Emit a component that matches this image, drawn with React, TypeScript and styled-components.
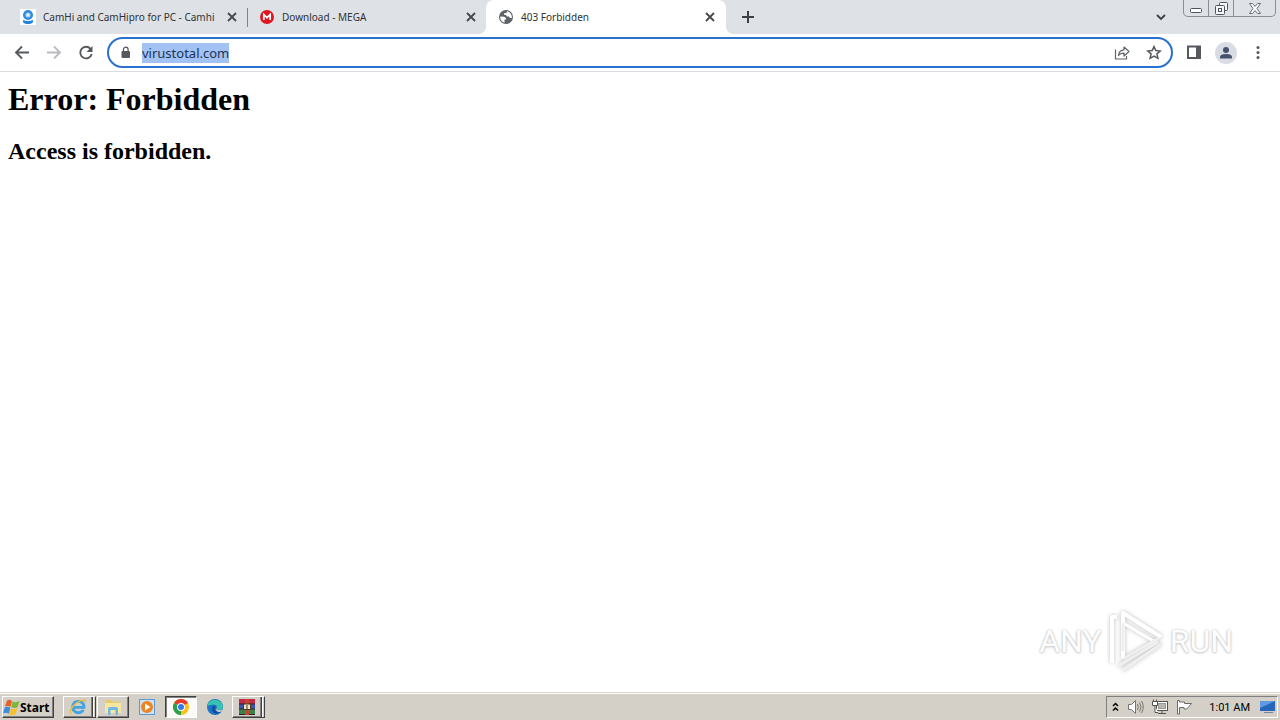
import React from "react";
import styled, { createGlobalStyle, css } from "styled-components";

const GlobalStyle = createGlobalStyle`
  * { box-sizing: border-box; }
  html, body { margin: 0; background: #fff; }
  button, input { font: inherit; color: inherit; margin: 0; padding: 0; border: 0; background: none; }
  svg { display: block; flex: none; }
`;

const Desktop = styled.div`
  position: relative;
  min-height: 100vh;
  display: flex;
  flex-direction: column;
  font-family: Roboto, "Noto Sans", sans-serif;
  font-size: 11px;
  color: #3c4043;
`;

const TabStrip = styled.header`
  display: flex;
  height: 34px;
  padding-left: 8px;
  background: #dee1e6;
`;

const TabList = styled.nav`
  display: flex;
  min-width: 0;
  margin-right: 5px;
`;

const Tab = styled.div<{ $active?: boolean; $divided?: boolean }>`
  position: relative;
  display: flex;
  align-items: center;
  gap: 7px;
  width: 239px;
  padding: 0 7px 0 12px;
  border-radius: 8px 8px 0 0;
  ${(p) =>
    p.$active &&
    css`
      width: 240px;
      padding-right: 8px;
      background: #fff;
      &::before,
      &::after {
        content: "";
        position: absolute;
        bottom: 0;
        width: 8px;
        height: 8px;
      }
      &::before {
        left: -8px;
        background: radial-gradient(circle at 0 0, transparent 8px, #fff 8px);
      }
      &::after {
        right: -8px;
        background: radial-gradient(circle at 100% 0, transparent 8px, #fff 8px);
      }
    `}
  ${(p) =>
    p.$divided &&
    css`
      &::after {
        content: "";
        position: absolute;
        right: -1px;
        top: 8px;
        width: 1px;
        height: 19px;
        background: #808489;
      }
    `}
`;

const TabTitle = styled.span`
  flex: 1;
  min-width: 0;
  white-space: nowrap;
  font-family: "Noto Sans", "Open Sans", sans-serif;
  font-size: 10px;
  line-height: 16px;
  color: #303236;
`;

const IconButton = styled.button<{ $size?: number }>`
  display: flex;
  flex: none;
  align-items: center;
  justify-content: center;
  width: ${(p) => p.$size ?? 32}px;
  height: ${(p) => p.$size ?? 32}px;
`;

const StripEnd = styled.div`
  display: flex;
  align-items: flex-start;
  gap: 5px;
  margin-left: auto;
  padding-right: 4px;
`;

const WindowControls = styled.div`
  display: flex;
  height: 17px;
  border: 1px solid #8a8d92;
  border-top: 0;
  border-radius: 0 0 5px 5px;
`;

const WindowButton = styled.button<{ $width: number }>`
  display: flex;
  align-items: center;
  justify-content: center;
  width: ${(p) => p.$width}px;
  & + & {
    border-left: 1px solid #8a8d92;
  }
`;

const Toolbar = styled.div`
  display: flex;
  align-items: center;
  height: 38px;
  padding: 0 6px;
  border-bottom: 1px solid #dcdcde;
  background: #fff;
`;

const AddressBar = styled.form`
  display: flex;
  flex: 1;
  align-items: center;
  height: 31px;
  margin: 0 5px;
  padding: 0 1px 0 10px;
  border: 2px solid #2a70cf;
  border-radius: 16px;
`;

const AddressInput = styled.input`
  flex: 1;
  min-width: 0;
  height: 20px;
  margin-left: 9px;
  outline: 0;
  font-family: "Noto Sans", "Open Sans", sans-serif;
  font-size: 13px;
  line-height: 20px;
  color: #1c3357;
  background: linear-gradient(#a1c2f3, #a1c2f3) left / 87px 20px no-repeat;
`;

const Page = styled.main`
  flex: 1;
  padding: 9px 8px;
  font-family: "Liberation Serif", serif;
  color: #000;
`;

const Heading = styled.h1`
  margin: 0 0 20px;
  font-size: 32px;
  line-height: 37px;
`;

const SubHeading = styled.h2`
  margin: 0;
  font-size: 24px;
  line-height: 27px;
`;

const Watermark = styled.div`
  position: absolute;
  right: 47px;
  bottom: 47px;
  display: flex;
  align-items: center;
  gap: 5px;
  font-family: Roboto, sans-serif;
  font-size: 32px;
  line-height: 64px;
  color: #fdfdfd;
  text-shadow: 0 0 2px #bbb, 0 1px 3px #ccc;
`;

const Taskbar = styled.footer`
  display: flex;
  align-items: center;
  height: 28px;
  padding: 1px 2px 0;
  border-top: 1px solid #d8d5cf;
  box-shadow: inset 0 1px #fff;
  background: #d4d0c8;
  color: #000;
`;

const StartButton = styled.button`
  display: flex;
  align-items: center;
  width: 52px;
  height: 22px;
  margin-right: 9px;
  border: 1px solid;
  border-color: #fff #404040 #404040 #fff;
  box-shadow: inset -1px -1px #808080;
  font-family: "Noto Sans", "Open Sans", sans-serif;
  font-weight: 700;
  font-size: 12px;
`;

const TaskButton = styled.button<{ $state?: "open" | "active" | "grouped" }>`
  display: flex;
  align-items: center;
  justify-content: center;
  width: 34px;
  height: 22px;
  ${(p) =>
    p.$state === "grouped" &&
    css`
      width: 33px;
      padding-right: 4px;
      border: 1px solid;
      border-color: #fff #404040 #404040 #fff;
      box-shadow: inset -1px 0 #d4d0c8, inset -2px 0 #fff, inset -3px 0 #404040, inset -4px -1px #808080;
    `}
  ${(p) =>
    p.$state === "open" &&
    css`
      width: 32px;
      margin: 0 1px;
      border: 1px solid;
      border-color: #fff #404040 #404040 #fff;
      box-shadow: inset -1px -1px #808080;
    `}
  ${(p) =>
    p.$state === "active" &&
    css`
      width: 32px;
      margin: 0 1px;
      border: 1px solid;
      border-color: #404040 #fff #fff #404040;
      box-shadow: inset 1px 1px #808080;
      background: #fbfaf8;
    `}
`;

const Tray = styled.div`
  display: flex;
  align-items: center;
  gap: 8px;
  height: 22px;
  margin-left: auto;
  padding: 0 1px 0 5px;
  border: 1px solid;
  border-color: #808080 #fff #fff #808080;
`;

const Clock = styled.time`
  margin: 0 2px 0 8px;
  white-space: nowrap;
`;

const CloseIcon = () => (
  <svg width="10" height="10" viewBox="0 0 10 10" stroke="#45484c" strokeWidth="1.8">
    <path d="M1 1l8 8M9 1l-8 8" />
  </svg>
);

const CameraFavicon = () => (
  <svg width="16" height="16" viewBox="0 0 16 16">
    <rect width="16" height="16" fill="#fff" />
    <circle cx="8" cy="6" r="5" fill="#2c8be0" />
    <circle cx="8" cy="6" r="2.6" fill="#9bd0f8" />
    <circle cx="8" cy="6" r="1.4" fill="#e4f3ff" />
    <path d="M3 11q5 2 10 0v2q-1 2-5 2t-5-2z" fill="#2582d8" />
  </svg>
);

const MegaFavicon = () => (
  <svg width="16" height="16" viewBox="0 0 16 16">
    <circle cx="8" cy="8" r="7" fill="#df1720" />
    <path d="M4.800 11V5.500L8 8.700l3.200-3.200V11" fill="none" stroke="#fff" strokeWidth="1.700" />
  </svg>
);

const GlobeFavicon = () => (
  <svg width="16" height="16" viewBox="0 0 16 16">
    <circle cx="8" cy="8" r="7" fill="#5f6368" />
    <path d="M2.300 7.500l3.700.2 2 1.300v1.500H6.500v3.300A6 6 0 0 1 2.300 7.500zM9 2.200L8.500 4H6.300v2H8l1 1.500h2l1 1.500h1.800A6 6 0 0 0 9 2.200z" fill="#fff" />
  </svg>
);

const ArrowIcon = ({ forward }: { forward?: boolean }) => (
  <svg width="16" height="16" viewBox="0 0 16 16" fill="none" stroke={forward ? "#b9bbbe" : "#55585c"} strokeWidth="1.800">
    <path d={forward ? "M1 7.500h13M8 1.500l6 6-6 6" : "M15 7.500H2M8 1.500l-6 6 6 6"} />
  </svg>
);

const ReloadIcon = () => (
  <svg width="16" height="16" viewBox="0 0 16 16">
    <path d="M12.500 3.800A5.800 5.800 0 1 0 13.700 9" fill="none" stroke="#55585c" strokeWidth="1.900" />
    <path d="M14.500 1v6H8.500z" fill="#55585c" />
  </svg>
);

const LockIcon = () => (
  <svg width="14" height="14" viewBox="0 0 14 14">
    <rect x="2.500" y="5" width="8.500" height="7" rx="1" fill="#55585c" />
    <path d="M4.500 6V3.500a2.300 2.300 0 0 1 4.600 0V6" fill="none" stroke="#55585c" strokeWidth="1.300" />
  </svg>
);

const ShareIcon = () => (
  <svg width="16" height="16" viewBox="0 0 16 16" fill="none" stroke="#5f6368" strokeWidth="1.200">
    <path d="M1.500 4.500v9.500h11v-3" />
    <path d="M4.500 10.500q.5-5.500 5.500-5.700V2L15 6.500l-5 4.500V8.200Q6.500 8 4.500 10.500z" strokeLinejoin="round" />
  </svg>
);

const StarIcon = () => (
  <svg width="16" height="16" viewBox="0 0 16 16" fill="none" stroke="#55585c" strokeWidth="1.500">
    <path d="M8 1.600l1.800 4 4.500.4-3.400 2.900 1 4.400L8 11l-3.900 2.300 1-4.400L1.700 6l4.500-.4z" />
  </svg>
);

const PanelIcon = () => (
  <svg width="16" height="16" viewBox="0 0 16 16">
    <path d="M1 0.500h14v13.500H1zM3 2.500v9.500h7V2.500z" fillRule="evenodd" fill="#55585c" />
  </svg>
);

const ProfileIcon = () => (
  <svg width="22" height="22" viewBox="0 0 22 22">
    <circle cx="11" cy="11" r="11" fill="#dadce3" />
    <circle cx="11" cy="8" r="3" fill="#46526c" />
    <path d="M5 16.500v-1.500q0-3 6-3t6 3v1.500z" fill="#46526c" />
  </svg>
);

const MenuIcon = () => (
  <svg width="4" height="16" viewBox="0 0 4 16" fill="#55585c">
    <circle cx="2" cy="2.500" r="1.500" />
    <circle cx="2" cy="7.500" r="1.500" />
    <circle cx="2" cy="12.500" r="1.500" />
  </svg>
);

const FlagIcon = () => (
  <svg width="17" height="17" viewBox="0 0 17 17">
    <path d="M4 1.500q3-1.500 5 .5L7.600 7.800Q5 6.300 2 7.600z" fill="#e8602c" />
    <path d="M9.600 2.500q3 1.500 6.900-.5L14.600 8.300q-3.300 1.500-6.400 0z" fill="#7cb63c" />
    <path d="M1.700 8.500q3-1.500 5.600.2L6 14.700Q3.500 13 0 14.300z" fill="#3e8edb" />
    <path d="M7.900 9.300q3 1.500 6.400 0L12.500 15.500q-3 1.500-6-.2z" fill="#f6c22c" />
  </svg>
);

const InternetExplorerIcon = () => (
  <svg width="18" height="18" viewBox="0 0 18 18" fill="none">
    <path d="M14.300 11.800A5.700 5.700 0 1 1 15 9.300H5" stroke="#3fa3e4" strokeWidth="2.800" />
    <path d="M2.800 16C-.8 14.500 2.500 8.500 7.500 5s9.500-4.500 9-.5" stroke="#efbd35" strokeWidth="1.500" />
  </svg>
);

const FolderIcon = () => (
  <svg width="18" height="18" viewBox="0 0 18 18">
    <path d="M2 2h5l1 1.500h7V15H2z" fill="#eacb68" />
    <path d="M1 5h16v10H1z" fill="#f7e6a0" />
    <path d="M4 17v-6q0-2 2-2h6q2 0 2 2v6h-2.500v-5h-5v5z" fill="#6eb8e4" />
  </svg>
);

const MediaIcon = () => (
  <svg width="16" height="16" viewBox="0 0 16 16">
    <rect x=".5" y=".5" width="15" height="15" fill="#cde3f5" stroke="#5b9bd2" />
    <circle cx="8" cy="8" r="6" fill="#ee8420" />
    <path d="M6 4.500l5.500 3.500L6 11.500z" fill="#fff" />
  </svg>
);

const ChromeIcon = () => (
  <svg width="16" height="16" viewBox="0 0 16 16">
    <circle cx="8" cy="8" r="8" fill="#fbc116" />
    <path d="M8 8L1.070 4A8 8 0 0 1 14.930 4z" fill="#e33b2e" />
    <path d="M8 8L8 16A8 8 0 0 1 1.070 4z" fill="#2aa24c" />
    <circle cx="8" cy="8" r="4" fill="#fff" />
    <circle cx="8" cy="8" r="3" fill="#3478e6" />
  </svg>
);

const EdgeIcon = () => (
  <svg width="16" height="16" viewBox="0 0 16 16">
    <circle cx="8" cy="8" r="8" fill="#1976c8" />
    <path d="M.2 7A8 8 0 0 1 16 8q-.2 3-3.500 3-3.500 0-2.500-2 .5-3-3-3.500-4 0-6.800 1.500z" fill="#36c4b0" />
    <path d="M6 7q-3 4 1 7 3 2 7-1-4 1-6-1.500Q7 9 9 8 8 6 6 7z" fill="#0f4f9f" />
    <path d="M9.500 8q-1 3.300 3 3.300 2 0 3-1.300l-1 2.500q-2 .8-3.500.3Q8 11.500 9.500 8z" fill="#d4d0c8" />
  </svg>
);

const ArchiveIcon = () => (
  <svg width="18" height="18" viewBox="0 0 18 18">
    <rect x="1" y="1" width="16" height="5" fill="#c02a48" />
    <rect x="1" y="6" width="16" height="5" fill="#3c55ac" />
    <rect x="1" y="11" width="16" height="5" fill="#3d8050" />
    <path d="M1 6h16M1 11h16M1 16.500h16" stroke="#342222" />
    <rect x="7" y="1" width="4" height="16" fill="#c4452c" />
    <rect x="5.500" y="6" width="7" height="5.500" fill="#eee4c4" stroke="#4d3b25" />
    <path d="M9 7v4" stroke="#4d3b25" />
  </svg>
);

const SpeakerIcon = () => (
  <svg width="17" height="16" viewBox="0 0 17 16" fill="none" stroke="#77756f">
    <path d="M1.500 5.500h3l4-4v13l-4-4h-3z" fill="#fff" />
    <path d="M10.500 5q1.500 3 0 6M12.500 3.500q3 4.500 0 9M14.500 2q3.500 6 0 12" />
  </svg>
);

const NetworkIcon = () => (
  <svg width="16" height="16" viewBox="0 0 16 16" fill="#fff" stroke="#55534f">
    <rect x="4.500" y="2.500" width="11" height="9" />
    <rect x="6.500" y="4.500" width="7" height="5" fill="#bbb8b0" stroke="#999" />
    <path d="M.5 2.500h5v4h-5zM1.500.5v2M4.500.5v2M3 6.500v7h3M6 14.500h8M10 11.500v3" />
  </svg>
);

const PennantIcon = () => (
  <svg width="17" height="16" viewBox="0 0 17 16" fill="#fff" stroke="#6c6a65">
    <path d="M1.500 1.500H3.500V3H8.500V4.500H15.500L13 7.500 10.500 10H8V8.500H3.500V15h-2z" />
  </svg>
);

const DesktopIcon = () => (
  <svg width="16" height="16" viewBox="0 0 16 16">
    <path d="M0 2h15v10H0z" fill="#2766bd" />
    <path d="M0 2h15L0 9z" fill="#5f9be3" />
    <path d="M4 13h9v1H4z" fill="#74859e" />
  </svg>
);

const PlayDrawing = styled.svg`
  filter: drop-shadow(0 0 2px #bdbdbd);
`;

const PlayMark = () => (
  <PlayDrawing width="58" height="64" viewBox="0 0 58 64" fill="none" stroke="#fff" strokeWidth="4" strokeLinejoin="round">
    <path d="M10 8H5v46M16 50V4l38 24" />
    <path d="M16 14l32 19" strokeWidth="3" />
    <path d="M16 42V14M16 50l36-21M11 57l40-24M16 61l38-26" stroke="#efefef" strokeWidth="3" />
  </PlayDrawing>
);

export default function App() {
  return (
    <Desktop>
      <GlobalStyle />
      <TabStrip>
        <TabList aria-label="Tabs">
          <Tab $divided>
            <CameraFavicon />
            <TabTitle>CamHi and CamHipro for PC - Camhi</TabTitle>
            <IconButton $size={16} aria-label="Close tab"><CloseIcon /></IconButton>
          </Tab>
          <Tab>
            <MegaFavicon />
            <TabTitle>Download - MEGA</TabTitle>
            <IconButton $size={16} aria-label="Close tab"><CloseIcon /></IconButton>
          </Tab>
          <Tab $active>
            <GlobeFavicon />
            <TabTitle>403 Forbidden</TabTitle>
            <IconButton $size={16} aria-label="Close tab"><CloseIcon /></IconButton>
          </Tab>
        </TabList>
        <IconButton $size={34} aria-label="New tab">
          <svg width="12" height="12" viewBox="0 0 12 12" stroke="#3c4043" strokeWidth="2"><path d="M6 0v12M0 6h12" /></svg>
        </IconButton>
        <StripEnd>
          <IconButton $size={34} aria-label="Search tabs">
            <svg width="10" height="8" viewBox="0 0 10 8" fill="none" stroke="#3c4043" strokeWidth="1.800"><path d="M1 2l4 4 4-4" /></svg>
          </IconButton>
          <WindowControls>
            <WindowButton $width={24} aria-label="Minimize">
              <svg width="12" height="14" viewBox="0 0 12 14"><rect x=".5" y="7.500" width="11" height="4" rx="1" fill="#fff" stroke="#50545c" /></svg>
            </WindowButton>
            <WindowButton $width={25} aria-label="Restore">
              <svg width="13" height="13" viewBox="0 0 13 13" fill="#f5f6f8" stroke="#50545c"><rect x="4.500" y=".5" width="8" height="8" rx="1" /><rect x=".5" y="3.500" width="9" height="9" rx="1" /><rect x="3.500" y="6.500" width="3" height="3" /></svg>
            </WindowButton>
            <WindowButton $width={42} aria-label="Close">
              <svg width="12" height="11" viewBox="0 0 12 11" fill="#fff" stroke="#686c74"><path d="M.5.500h3L6 3.500 8.500.5h3L8 5.500l3.500 5h-3L6 7.500l-2.500 3h-3L4 5.500z" /></svg>
            </WindowButton>
          </WindowControls>
        </StripEnd>
      </TabStrip>
      <Toolbar>
        <IconButton aria-label="Back"><ArrowIcon /></IconButton>
        <IconButton aria-label="Forward" disabled><ArrowIcon forward /></IconButton>
        <IconButton aria-label="Reload"><ReloadIcon /></IconButton>
        <AddressBar>
          <LockIcon />
          <AddressInput aria-label="Address" defaultValue="virustotal.com" spellCheck={false} />
          <IconButton type="button" aria-label="Share"><ShareIcon /></IconButton>
          <IconButton type="button" aria-label="Bookmark"><StarIcon /></IconButton>
        </AddressBar>
        <IconButton aria-label="Side panel"><PanelIcon /></IconButton>
        <IconButton aria-label="Profile"><ProfileIcon /></IconButton>
        <IconButton aria-label="Menu"><MenuIcon /></IconButton>
      </Toolbar>
      <Page>
        <Heading>Error: Forbidden</Heading>
        <SubHeading>Access is forbidden.</SubHeading>
      </Page>
      <Watermark>
        <span>ANY</span>
        <PlayMark />
        <span>RUN</span>
      </Watermark>
      <Taskbar>
        <StartButton><FlagIcon />Start</StartButton>
        <TaskButton $state="grouped" aria-label="Internet Explorer"><InternetExplorerIcon /></TaskButton>
        <TaskButton $state="open" aria-label="File Explorer"><FolderIcon /></TaskButton>
        <TaskButton aria-label="Media Player"><MediaIcon /></TaskButton>
        <TaskButton $state="active" aria-label="Chrome"><ChromeIcon /></TaskButton>
        <TaskButton aria-label="Edge"><EdgeIcon /></TaskButton>
        <TaskButton $state="grouped" aria-label="WinRAR"><ArchiveIcon /></TaskButton>
        <Tray>
          <svg width="7" height="10" viewBox="0 0 7 10" fill="none" stroke="#000" strokeWidth="1.500"><path d="M1 4l2.500-2.500L6 4M1 8.500L3.500 6 6 8.500" /></svg>
          <SpeakerIcon />
          <NetworkIcon />
          <PennantIcon />
          <Clock>1:01 AM</Clock>
          <DesktopIcon />
        </Tray>
      </Taskbar>
    </Desktop>
  );
}
